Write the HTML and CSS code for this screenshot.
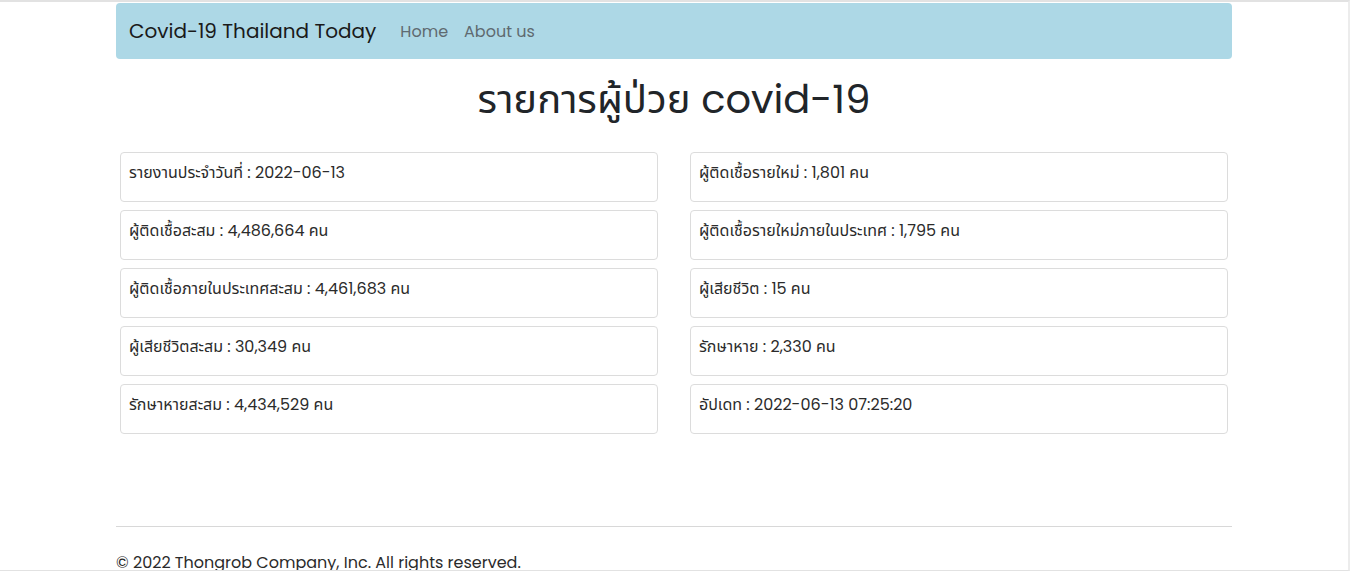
FILE: index.html
```html
<!DOCTYPE html>
<html lang="th">
<head>
<meta charset="utf-8">
<title>Covid-19 Thailand Today</title>
<link rel="stylesheet" href="styles.css">
</head>
<body>
<div class="frame">
  <div class="container">
    <nav class="navbar">
      <span class="brand">Covid-19 Thailand Today</span>
      <a class="nav-link" href="#">Home</a>
      <a class="nav-link" href="#">About us</a>
    </nav>
    <h1 class="title">รายการผู้ป่วย covid-19</h1>
    <div class="grid">
      <div class="card">รายงานประจำวันที่ : 2022-06-13</div>
      <div class="card">ผู้ติดเชื้อรายใหม่ : 1,801 คน</div>
      <div class="card">ผู้ติดเชื้อสะสม : 4,486,664 คน</div>
      <div class="card">ผู้ติดเชื้อรายใหม่ภายในประเทศ : 1,795 คน</div>
      <div class="card">ผู้ติดเชื้อภายในประเทศสะสม : 4,461,683 คน</div>
      <div class="card">ผู้เสียชีวิต : 15 คน</div>
      <div class="card">ผู้เสียชีวิตสะสม : 30,349 คน</div>
      <div class="card">รักษาหาย : 2,330 คน</div>
      <div class="card">รักษาหายสะสม : 4,434,529 คน</div>
      <div class="card">อัปเดท : 2022-06-13 07:25:20</div>
    </div>
    <footer class="footer">
      <hr class="rule">
      <p class="copy">© 2022 Thongrob Company, Inc. All rights reserved.</p>
    </footer>
  </div>
</div>
</body>
</html>
```
FILE: styles.css
```css
html, body {
  margin: 0;
  padding: 0;
  background: #fff;
}
body {
  font-family: "Poppins", "Open Sans", "Noto Sans", "Noto Sans Thai", sans-serif;
  color: #212529;
  overflow: hidden;
}
.frame {
  width: 1350px;
  height: 571px;
  border-top: 2px solid #e2e2e2;
  border-right: 2px solid #ececec;
  border-bottom: 1px solid #e2e2e2;
  box-sizing: border-box;
  overflow: hidden;
}
.container {
  width: 1116px;
  margin: 0 auto;
  padding-top: 1px;
}
.navbar {
  display: flex;
  align-items: center;
  height: 56px;
  background: #add8e6;
  border-radius: 4px;
  padding: 0 12px 0 13px;
  box-sizing: border-box;
}
.brand {
  font-size: 20px;
  color: #1a1a1a;
  margin-right: 16px;
}
.nav-link {
  font-size: 16px;
  color: #5f6a70;
  text-decoration: none;
  padding: 0 8px;
}
.title {
  font-size: 40px;
  font-weight: 400;
  text-align: center;
  margin: 16px 0 29px;
  line-height: 48px;
}
.grid {
  display: grid;
  grid-template-columns: 538px 538px;
  column-gap: 32px;
  row-gap: 8px;
  padding: 0 4px;
}
.card {
  height: 50px;
  box-sizing: border-box;
  border: 1px solid #dcdcdc;
  border-radius: 4px;
  padding: 9px 8px;
  font-size: 16px;
  line-height: 22px;
  color: #2b2b2b;
}
.footer {
  margin-top: 92px;
}
.rule {
  border: 0;
  border-top: 1px solid #d8d8d8;
  margin: 0;
}
.copy {
  margin: 23px 0 0;
  font-size: 16px;
  color: #2b2b2b;
}
```
